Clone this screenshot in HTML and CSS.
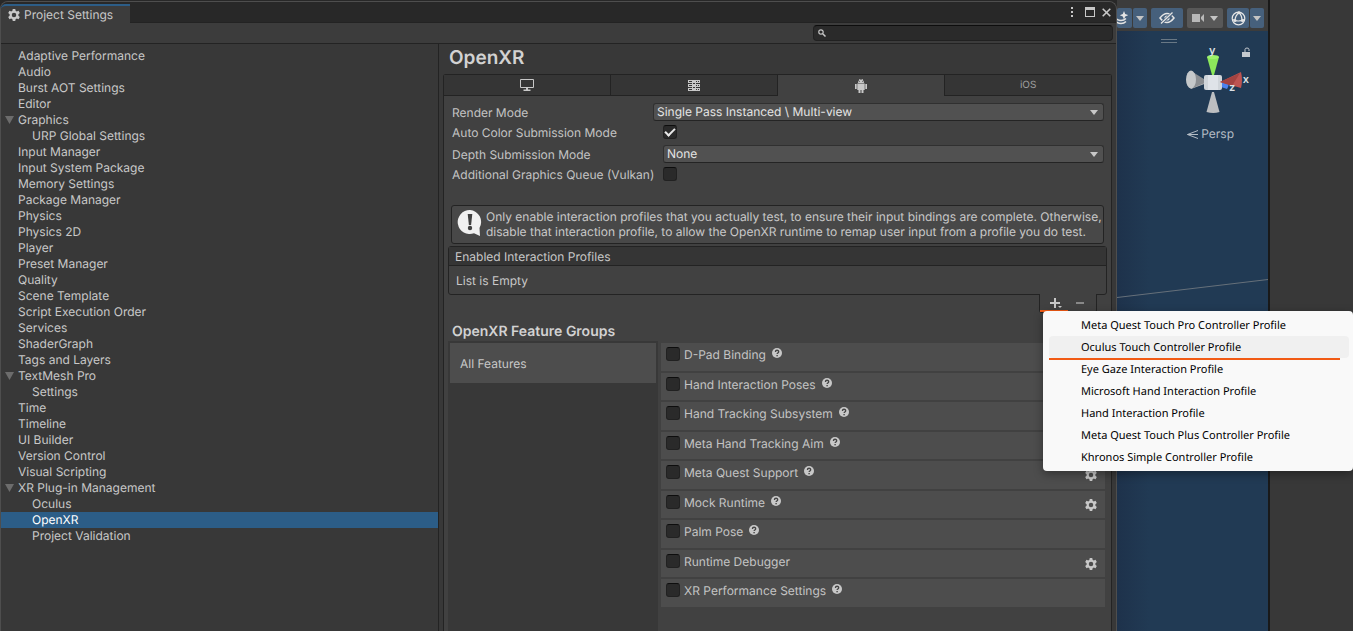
FILE: index.html
```html
<!DOCTYPE html>
<html lang="en">
<head>
<meta charset="utf-8">
<title>Project Settings</title>
<link rel="stylesheet" href="styles.css">
</head>
<body>
<svg class="defs" aria-hidden="true">
  <symbol id="gear" viewBox="0 0 24 24"><path fill-rule="evenodd" d="M9.500 0h5l.7 3.600 2.400 1.400 3.500-1.300 2.500 4.400-2.800 2.400v3l2.800 2.400-2.500 4.400-3.500-1.300-2.400 1.400-.7 3.600h-5l-.7-3.600-2.400-1.400-3.500 1.300L.4 15.900l2.800-2.400v-3L.4 8.100l2.500-4.400L6.400 5l2.400-1.400zM12 7.500a4.500 4.500 0 1 0 0 9 4.500 4.500 0 0 0 0-9z"/></symbol>
  <symbol id="down" viewBox="0 0 8 5"><path d="M0 0h8L4 5z"/></symbol>
  <symbol id="fold" viewBox="0 0 9 8"><path d="M0 0h9L4.500 8z"/></symbol>
  <symbol id="help" viewBox="0 0 10 10"><circle cx="5" cy="5" r="5"/><path d="M3.400 3.900c0-2.200 3.300-2.100 3.300-.2C6.700 4.900 5.100 4.900 5.100 6" fill="none" stroke="#444" stroke-width="1.300"/><rect x="4.400" y="7" width="1.400" height="1.300" fill="#444"/></symbol>
</svg>
<div class="desktop">
  <main class="window">
    <header class="titlebar">
      <div class="window-tab"><svg class="gear"><use href="#gear"/></svg>Project Settings</div>
      <div class="window-buttons">
        <button aria-label="More"><svg width="2" height="10"><path d="M0 0h2v2H0zM0 4h2v2H0zM0 8h2v2H0z"/></svg></button>
        <button aria-label="Maximize"><svg width="10" height="10"><path fill-rule="evenodd" d="M0 0h10v10H0zM1 3v6h8V3z"/></svg></button>
        <button aria-label="Close"><svg width="9" height="9"><path d="M.7.7l7.600 7.600M8.300.7L.7 8.300" stroke="#c8c8c8" stroke-width="1.600"/></svg></button>
      </div>
    </header>
    <div class="toolbar">
      <label class="search">
        <svg width="8" height="8" viewBox="0 0 8 8"><circle cx="3" cy="3" r="2.200" fill="none" stroke="#c8c8c8" stroke-width="1.200"/><path d="M4.700 4.700L7.500 7.500" stroke="#c8c8c8" stroke-width="1.500"/></svg>
        <input type="search" aria-label="Search settings">
      </label>
    </div>
    <div class="columns">
      <nav class="tree" aria-label="Settings">
        <a href="#">Adaptive Performance</a>
        <a href="#">Audio</a>
        <a href="#">Burst AOT Settings</a>
        <a href="#">Editor</a>
        <a href="#" class="open"><svg><use href="#fold"/></svg>Graphics</a>
        <a href="#" class="child">URP Global Settings</a>
        <a href="#">Input Manager</a>
        <a href="#">Input System Package</a>
        <a href="#">Memory Settings</a>
        <a href="#">Package Manager</a>
        <a href="#">Physics</a>
        <a href="#">Physics 2D</a>
        <a href="#">Player</a>
        <a href="#">Preset Manager</a>
        <a href="#">Quality</a>
        <a href="#">Scene Template</a>
        <a href="#">Script Execution Order</a>
        <a href="#">Services</a>
        <a href="#">ShaderGraph</a>
        <a href="#">Tags and Layers</a>
        <a href="#" class="open"><svg><use href="#fold"/></svg>TextMesh Pro</a>
        <a href="#" class="child">Settings</a>
        <a href="#">Time</a>
        <a href="#">Timeline</a>
        <a href="#">UI Builder</a>
        <a href="#">Version Control</a>
        <a href="#">Visual Scripting</a>
        <a href="#" class="open"><svg><use href="#fold"/></svg>XR Plug-in Management</a>
        <a href="#" class="child">Oculus</a>
        <a href="#" class="child selected" aria-current="page">OpenXR</a>
        <a href="#" class="child">Project Validation</a>
      </nav>
      <section class="content">
        <h1>OpenXR</h1>
        <div class="panel">
          <div class="platforms" role="tablist">
            <button role="tab" aria-label="Desktop"><svg width="14" height="12"><path fill-rule="evenodd" d="M1 0h12q1 0 1 1v7q0 1-1 1H8v1.500h2.500V12h-7v-1.500H6V9H1Q0 9 0 8V1Q0 0 1 0zM1 1v7h12V1z"/></svg></button>
            <button role="tab" aria-label="Dedicated server"><svg width="12" height="11"><path d="M0 0h12v3H0zM0 4h12v3H0zM0 8h12v3H0z"/><path d="M4 3h1v1H4zM7 3h1v1H7zM4 7h1v1H4zM7 7h1v1H7z"/><path d="M1 1h3v1H1zM1 5h3v1H1zM1 9h3v1H1zM8 1h1v1H8zM10 1h1v1h-1zM8 5h1v1H8zM10 5h1v1h-1zM8 9h1v1H8zM10 9h1v1h-1z" fill="#353535"/></svg></button>
            <button role="tab" aria-label="Android" aria-selected="true"><svg width="12" height="14"><path d="M3 4q0-2.500 1.500-3L4 0h1l.5.700h1L7 0h1l-.5 1Q9 1.500 9 4zM0 5h1.700v5H0zM10.300 5H12v5h-1.700zM2.300 4.600h7.400V11H8.500v3h-2v-3h-1v3h-2v-3H2.300z"/><path d="M4 2h1v1H4zM7 2h1v1H7z" fill="#777"/></svg></button>
            <button role="tab">iOS</button>
          </div>
          <div class="form">
            <label for="render">Render Mode</label>
            <div class="select wide"><select id="render"><option>Single Pass Instanced \ Multi-view</option></select><svg><use href="#down"/></svg></div>
            <label for="auto">Auto Color Submission Mode</label>
            <input class="check" id="auto" type="checkbox" checked>
            <label for="depth">Depth Submission Mode</label>
            <div class="select"><select id="depth"><option>None</option></select><svg><use href="#down"/></svg></div>
            <label for="queue">Additional Graphics Queue (Vulkan)</label>
            <input class="check" id="queue" type="checkbox">
          </div>
          <div class="notice">
            <svg width="26" height="28" viewBox="0 0 26 28"><path d="M13 1a12 12 0 1 0 4 23.200L23 27l-.5-8A12 12 0 0 0 13 1z" fill="#f0f0f0"/><path d="M10.700 5h4.600l-1.200 11h-2.200z" fill="#404040"/><circle cx="13" cy="19" r="2.200" fill="#404040"/></svg>
            <p>Only enable interaction profiles that you actually test, to ensure their input bindings are complete. Otherwise,<br>disable that interaction profile, to allow the OpenXR runtime to remap user input from a profile you do test.</p>
          </div>
          <div class="profiles">
            <h2>Enabled Interaction Profiles</h2>
            <p>List is Empty</p>
          </div>
          <div class="profile-actions">
            <button class="add" aria-label="Add profile"><svg width="13" height="12"><path d="M4 1h2v4h4v2H6v4H4V7H0V5h4zM8 9h4l-2 2z"/></svg></button>
            <button aria-label="Remove profile"><svg width="8" height="2"><path d="M0 0h8v2H0z" fill="#888"/></svg></button>
            <ul class="menu">
              <li><button>Meta Quest Touch Pro Controller Profile</button></li>
              <li class="hover"><button>Oculus Touch Controller Profile</button></li>
              <li><button>Eye Gaze Interaction Profile</button></li>
              <li><button>Microsoft Hand Interaction Profile</button></li>
              <li><button>Hand Interaction Profile</button></li>
              <li><button>Meta Quest Touch Plus Controller Profile</button></li>
              <li><button>Khronos Simple Controller Profile</button></li>
            </ul>
          </div>
          <h2 class="groups-title">OpenXR Feature Groups</h2>
          <div class="groups">
            <div class="group-list"><button>All Features</button></div>
            <div class="features">
              <div class="feature"><input class="check" type="checkbox" id="f1"><label for="f1">D-Pad Binding</label><svg class="help"><use href="#help"/></svg></div>
              <div class="feature"><input class="check" type="checkbox" id="f2"><label for="f2">Hand Interaction Poses</label><svg class="help"><use href="#help"/></svg></div>
              <div class="feature"><input class="check" type="checkbox" id="f3"><label for="f3">Hand Tracking Subsystem</label><svg class="help"><use href="#help"/></svg></div>
              <div class="feature"><input class="check" type="checkbox" id="f4"><label for="f4">Meta Hand Tracking Aim</label><svg class="help"><use href="#help"/></svg></div>
              <div class="feature"><input class="check" type="checkbox" id="f5"><label for="f5">Meta Quest Support</label><svg class="help"><use href="#help"/></svg><button aria-label="Meta Quest Support settings"><svg class="gear"><use href="#gear"/></svg></button></div>
              <div class="feature"><input class="check" type="checkbox" id="f6"><label for="f6">Mock Runtime</label><svg class="help"><use href="#help"/></svg><button aria-label="Mock Runtime settings"><svg class="gear"><use href="#gear"/></svg></button></div>
              <div class="feature"><input class="check" type="checkbox" id="f7"><label for="f7">Palm Pose</label><svg class="help"><use href="#help"/></svg></div>
              <div class="feature"><input class="check" type="checkbox" id="f8"><label for="f8">Runtime Debugger</label><button aria-label="Runtime Debugger settings"><svg class="gear"><use href="#gear"/></svg></button></div>
              <div class="feature"><input class="check" type="checkbox" id="f9"><label for="f9">XR Performance Settings</label><svg class="help"><use href="#help"/></svg></div>
            </div>
          </div>
        </div>
      </section>
    </div>
  </main>
  <section class="scene" aria-label="Scene view">
    <div class="scene-bar">
      <div class="pair first">
        <button aria-label="Effects"><svg width="11" height="14" viewBox="2 0 11 14"><path d="M9 0l1.200 3 3 1.200-3 1.200L9 8.500 7.800 5.400l-3-1.200 3-1.200z"/><path d="M0 7q3 2.500 6 2.500t5-2M0 10q3 2.500 6 2.500t5-2" fill="none" stroke="#e4e4e4" stroke-width="1.400"/></svg></button>
        <button aria-label="Effects options"><svg class="arrow"><use href="#down"/></svg></button>
      </div>
      <button class="eye" aria-label="Hidden objects"><svg width="16" height="14" viewBox="0 0 16 14"><path d="M1 7q7-9 14 0-7 9-14 0z" fill="none" stroke="#e4e4e4" stroke-width="1.500"/><circle cx="8" cy="7" r="2.600"/><path d="M2 12.500L14 1.500" stroke="#46607c" stroke-width="3"/><path d="M2 12.500L13.500 1.500" stroke="#e4e4e4" stroke-width="1.300"/></svg></button>
      <button class="camera" aria-label="Camera"><svg width="13" height="10"><path d="M0 1h8v8H0zM9 4l3-3v8L9 6z" fill="#b8b8b8"/></svg><svg class="arrow"><use href="#down"/></svg></button>
      <div class="pair">
        <button aria-label="Gizmos"><svg width="15" height="15" viewBox="0 0 15 15"><g fill="none" stroke="#e8e8e8" stroke-width="1.200"><circle cx="7.500" cy="7.500" r="6.300"/><path d="M8 1.500Q4 5 4 9.500M8 1.500q3 3 3 8M1.500 8.500Q7 11.500 13.500 8.500"/></g><circle cx="8" cy="1.700" r="1.500"/><circle cx="4" cy="9.500" r="1.500"/><circle cx="11.500" cy="9.500" r="1.500"/></svg></button>
        <button aria-label="Gizmos options"><svg class="arrow"><use href="#down"/></svg></button>
      </div>
    </div>
    <div class="viewport">
      <div class="overlay">
        <svg width="86" height="84" viewBox="0 0 86 84">
          <path d="M1 8.500h16M1 11.500h16" stroke="#697885"/>
          <path d="M31 58l16-6-7-4-11 7z" fill="#b5b6b8"/>
          <path d="M31 40l17 10.500L33 57z" fill="#8b8e92"/>
          <ellipse cx="31" cy="48.500" rx="5" ry="9" fill="#c5c8ca"/>
          <path d="M61 51h7q1.500 3-1 7l-6-2z" fill="#4b82ee"/>
          <rect x="44" y="44" width="18" height="15" rx="2" fill="#d0d5da"/>
          <path d="M48 44h10v15H48z" fill="#dfe3e8"/>
          <path d="M47 26h12l-5 18h-2z" fill="#8ce85b"/>
          <ellipse cx="53" cy="26" rx="6" ry="2" fill="#9df36b"/>
          <path d="M60 51l21-10q2 8 0 16z" fill="#bd5451"/>
          <path d="M60 51l20-9-8 13z" fill="#a34341"/>
          <path d="M52 61h2l5.500 20q-6 2-13 0z" fill="#bcbec1"/>
          <text x="49" y="23" class="axis">y</text><text x="69" y="60" class="axis">z</text>
        </svg>
        <div class="overlay-side">
          <svg width="8" height="10"><path d="M3 5V2.500Q3 1 5 1t2 1.500V4" fill="none" stroke="#c4c9cf"/><path d="M0 5h8v5H0z" fill="#c4c9cf"/></svg>
          <span>x</span>
        </div>
      </div>
      <div class="persp"><svg width="11" height="9"><path d="M11 .5L.5 4.500 11 8.500M.5 4.500H11" fill="none" stroke="#b4bcc4"/></svg>Persp</div>
      <svg class="horizon" viewBox="0 0 151 19" preserveAspectRatio="none"><path d="M0 18.500L151 .5" stroke="#66707a" fill="none"/></svg>
    </div>
  </section>
  <aside class="dock"></aside>
</div>
</body>
</html>
```
FILE: styles.css
```css
* { box-sizing: border-box; }
body { margin: 0; background: #383838; color: #c8c8c8; font: 12px/16px Inter, "Liberation Sans", sans-serif; text-rendering: geometricPrecision; overflow: hidden; }
h1, h2, p, ul { margin: 0; padding: 0; font-weight: 400; font-size: 12px; }
button, input, select { font: inherit; color: inherit; margin: 0; padding: 0; border: 0; background: none; text-rendering: inherit; }
svg { display: block; fill: #c8c8c8; flex: none; }
.defs { position: absolute; width: 0; height: 0; }
.gear { width: 12px; height: 12px; }

.desktop { display: grid; grid-template-columns: minmax(0, 1fr) 151px 85px; min-height: 100vh; background: #282828; }
.window { display: flex; flex-direction: column; position: relative; z-index: 1; margin-top: 1px; background: #383838; border: 1px solid #4e4e4e; border-bottom: 0; border-radius: 8px 8px 0 0; }
.titlebar { display: flex; justify-content: space-between; height: 21px; background: #282828; border-bottom: 1px solid #232323; border-radius: 7px 7px 0 0; }
.window-tab { display: flex; align-items: center; gap: 4px; height: 19px; margin-top: 2px; padding: 0 17px 0 7px; background: #3c3c3c; border-top: 2px solid #2c5d87; border-top-left-radius: 5px; }
.window-buttons { display: flex; align-items: center; gap: 7px; padding-right: 5px; }
.window-buttons button:first-child { margin-right: 5px; }
.toolbar { display: flex; justify-content: flex-end; height: 21px; padding: 2px 3px; background: #3c3c3c; border-bottom: 1px solid #232323; }
.search { display: flex; align-items: center; gap: 4px; width: 300px; height: 16px; padding: 0 4px; background: #2a2a2a; border: 1px solid #212121; border-top-color: #0d0d0d; border-radius: 4px; }
.search input { flex: 1; min-width: 0; height: 14px; outline: 0; appearance: none; }

.columns { flex: 1; display: flex; }
.tree { flex: 0 0 438px; padding-top: 4px; border-right: 1px solid #232323; }
.tree a { display: flex; align-items: center; height: 16px; padding-left: 17px; color: #c8c8c8; text-decoration: none; }
.tree .open { padding-left: 4px; gap: 4px; }
.tree .open svg { width: 9px; height: 8px; fill: #6c6c6c; }
.tree .child { padding-left: 31px; }
.tree .selected { background: #2c5d87; color: #fff; }

.content { flex: 1; min-width: 0; display: flex; flex-direction: column; padding: 0 4px; }
.content h1 { height: 30px; padding: 2px 6px; font-size: 19px; line-height: 24px; font-weight: 600; color: #d2d2d2; }
.panel { flex: 1; display: flex; flex-direction: column; background: #414141; border: 1px solid #232323; border-bottom: 0; border-radius: 3px 3px 0 0; }
.platforms { display: grid; grid-template-columns: repeat(4, 1fr); height: 21px; }
.platforms button { display: flex; align-items: center; justify-content: center; background: #353535; border-right: 1px solid #232323; border-bottom: 1px solid #232323; font-size: 10px; color: #a0a0a0; }
.platforms button:last-child { border-right: 0; border-left: 1px solid #232323; }
.platforms [aria-selected] { background: #414141; border: 0; }

.form { display: grid; grid-template-columns: 211px minmax(0, 1fr); grid-template-rows: 20px 20px 24px 16px; align-items: center; margin: 6px 7px 0 8px; }
.form label { white-space: nowrap; padding-top: 2px; color: #c4c4c4; }
.select { display: grid; align-items: center; height: 18px; color: #e4e4e4; background: #515151; border: 1px solid #303030; border-bottom-color: #242424; border-radius: 3px; }
.select.wide { margin-left: -10px; }
.select select { grid-area: 1 / 1; appearance: none; width: 100%; height: 16px; padding: 0 0 1px 3px; outline: 0; }
.select svg { grid-area: 1 / 1; justify-self: end; width: 8px; height: 5px; margin-right: 5px; pointer-events: none; }
.check { appearance: none; display: grid; place-items: center; flex: none; width: 14px; height: 14px; background: #2a2a2a; border: 1px solid #212121; border-top-color: #0d0d0d; border-radius: 3px; }
.check:checked::after { content: ""; width: 8px; height: 4px; margin-bottom: 3px; border: solid #e8e8e8; border-width: 0 0 2px 2px; rotate: -45deg; }

.notice { display: flex; gap: 3px; margin: 23px 7px 0; padding: 3px 0 4px 5px; min-height: 39px; background: #484848; border: 1px solid #232323; border-radius: 3px; }
.notice p { line-height: 15px; white-space: nowrap; }
.profiles { margin: 2px 4px 0; border: 1px solid #232323; border-radius: 3px; }
.profiles h2 { height: 19px; padding: 2px 6px; line-height: 16px; background: #353535; border-bottom: 1px solid #232323; }
.profiles p { height: 28px; padding: 7px; }
.profile-actions { position: relative; align-self: flex-end; display: flex; width: 58px; height: 19px; margin: -1px 14px 0 0; background: #414141; border: 1px solid #232323; border-top: 0; border-radius: 0 0 3px 3px; }
.profile-actions > button { display: flex; align-items: center; justify-content: center; width: 24px; height: 18px; }
.profile-actions > .add { width: 28px; padding: 2px 0 0 4px; border-bottom: 2px solid #f15a14; }
.menu { position: absolute; top: 17px; left: 3px; width: 310px; padding: 3px 4px 3px 6px; list-style: none; color: #000; background: #f9f9f9; border-radius: 4px; box-shadow: 0 3px 10px rgba(0, 0, 0, .35); font-family: "Noto Sans", "Open Sans", sans-serif; font-size: 11px; }
.menu li { position: relative; height: 22px; border-radius: 4px; }
.menu button { display: block; width: 100%; height: 22px; padding: 2px 0 0 32px; text-align: left; white-space: nowrap; }
.menu .hover { background: #f0f0f0; }
.menu .hover::after { content: ""; position: absolute; left: 0; right: 9px; bottom: -2px; height: 2px; background: #f15a14; }

.groups-title { margin: 10px 8px 0; height: 18px; font-size: 14px; line-height: 18px; font-weight: 600; color: #d2d2d2; }
.groups { flex: 1; display: flex; gap: 3px; margin: 0 6px 0 4px; }
.group-list { flex: 0 0 210px; padding: 2px; background: #383838; }
.group-list button { width: 100%; height: 40px; padding: 2px 0 0 10px; text-align: left; background: #4d4d4d; }
.features { flex: 1; align-self: flex-start; display: grid; grid-auto-rows: 1fr; gap: 2px; min-height: 264px; margin-top: 2px; }
.feature { display: flex; align-items: flex-start; padding: 4px 8px 0 5px; background: #4d4d4d; }
.feature label { margin-left: 4px; color: #c4c4c4; }
.feature .help { width: 10px; height: 10px; margin: 1px 0 0 6px; }
.feature button { margin: 4px 0 0 auto; }

.scene { display: flex; flex-direction: column; min-width: 0; }
.scene-bar { display: flex; justify-content: space-between; height: 31px; padding: 8px 4px 3px 0; background: #3c3c3c; }
.scene-bar button { display: flex; align-items: center; justify-content: center; gap: 5px; height: 20px; background: #46607c; border-radius: 2px; }
.scene-bar svg { fill: #e4e4e4; }
.scene-bar .arrow { width: 8px; height: 5px; fill: #c4c4c4; }
.pair { display: flex; gap: 1px; }
.pair button:first-child { width: 22px; }
.pair button:last-child { width: 14px; }
.pair.first button:first-child { width: 15px; justify-content: flex-start; }
.scene-bar .eye { width: 32px; }
.scene-bar .camera { width: 36px; background: #585858; }
.viewport { flex: 1; display: flex; flex-direction: column; background: linear-gradient(90deg, #1e324b, #213a54 32px); }
.overlay { display: flex; align-self: flex-end; padding-right: 16px; }
.overlay-side { display: flex; flex-direction: column; align-items: center; gap: 14px; width: 12px; margin-left: -6px; padding-top: 16px; font-weight: 600; font-size: 11px; line-height: 16px; color: #dde1e5; }
.axis { font-size: 11px; font-weight: 600; fill: #dde1e5; }
.persp { display: flex; align-items: center; align-self: flex-end; gap: 3px; margin: 11px 34px 0 0; color: #b4bcc4; }
.horizon { width: 100%; height: 19px; margin-top: 137px; }
.dock { background: #383838; border-left: 2px solid #191919; }
```
